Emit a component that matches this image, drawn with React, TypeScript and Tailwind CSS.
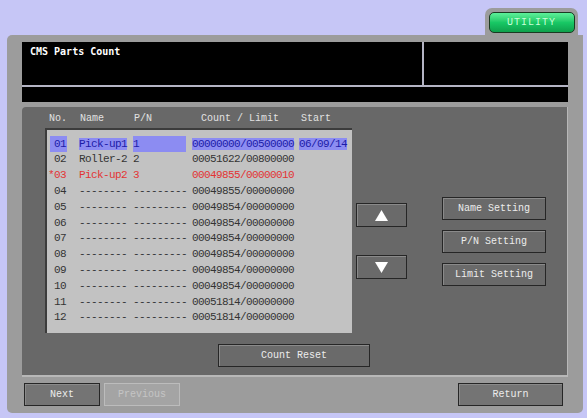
import React from "react";

const mono = { fontFamily: '"Liberation Mono", "DejaVu Sans Mono", monospace' };
const monoBold = { fontFamily: '"DejaVu Sans Mono", "Liberation Mono", monospace' };

type Row = { no: string; name: string; pn: string; count: string; start?: string; kind?: "sel" | "red" };

const rows: Row[] = [
  { no: "01", name: "Pick-up1", pn: "1", count: "00000000/00500000", start: "06/09/14", kind: "sel" },
  { no: "02", name: "Roller-2", pn: "2", count: "00051622/00800000" },
  { no: "*03", name: "Pick-up2", pn: "3", count: "00049855/00000010", kind: "red" },
  { no: "04", name: "--------", pn: "---------", count: "00049855/00000000" },
  { no: "05", name: "--------", pn: "---------", count: "00049854/00000000" },
  { no: "06", name: "--------", pn: "---------", count: "00049854/00000000" },
  { no: "07", name: "--------", pn: "---------", count: "00049854/00000000" },
  { no: "08", name: "--------", pn: "---------", count: "00049854/00000000" },
  { no: "09", name: "--------", pn: "---------", count: "00049854/00000000" },
  { no: "10", name: "--------", pn: "---------", count: "00049854/00000000" },
  { no: "11", name: "--------", pn: "---------", count: "00051814/00000000" },
  { no: "12", name: "--------", pn: "---------", count: "00051814/00000000" },
];

function Btn({ children, className = "" }: { children: React.ReactNode; className?: string }) {
  return (
    <div
      className={
        "flex items-center justify-center bg-[#6a6a6a] border border-[#262626] text-[#ececec] text-[10px] shadow-[inset_1px_1px_0_#8a8a8a] " +
        className
      }
      style={mono}
    >
      {children}
    </div>
  );
}

export default function App() {
  return (
    <div className="w-[587px] h-[418px] bg-[#c6c6f6] flex flex-col overflow-hidden" style={mono}>
      {/* top strip with tab */}
      <div className="h-[35px] flex justify-end items-end pr-[9px]">
        <div className="w-[93px] h-[27px] bg-[#9c9c9c] rounded-t-[7px] flex justify-center pt-[4px]">
          <div className="w-[86px] h-[21px] rounded-[5px] border border-[#1a3a22] bg-gradient-to-b from-[#5cf09a] via-[#18c865] to-[#0ea04c] flex items-center justify-center text-[10px] tracking-[1px] text-[#c8ffd8]">
            UTILITY
          </div>
        </div>
      </div>

      {/* main panel */}
      <div className="ml-[7px] w-[576px] h-[378px] bg-[#9c9c9c] rounded-b-[5px] rounded-tl-[5px] pt-[7px] px-[15px] flex flex-col">
        {/* black header */}
        <div className="w-[546px] h-[60px] bg-black flex flex-col">
          <div className="h-[43px] flex">
            <div className="w-[400px] pl-[8px] pt-[2px] text-white text-[10px] font-bold" style={monoBold}>
              CMS Parts Count
            </div>
            <div className="w-[2px] bg-[#b4b4c4]" />
            <div className="flex-1" />
          </div>
          <div className="h-[2px] bg-[#b4b4c4]" />
          <div className="flex-1" />
        </div>

        {/* dark panel */}
        <div className="mt-[5px] w-[546px] h-[270px] bg-[#686868] rounded-tl-[4px] border-b-2 border-r border-[#b8b8b8] flex flex-col">
          {/* headers */}
          <div className="h-[21px] flex items-center text-[10px] text-[#e2e2e2] pt-[1px]">
            <div className="w-[45px] text-right">No.</div>
            <div className="ml-[13px] w-[54px]">Name</div>
            <div className="w-[67px]">P/N</div>
            <div className="w-[100px]">Count / Limit</div>
            <div>Start</div>
          </div>

          <div className="flex items-start">
            {/* list */}
            <div className="ml-[23px] w-[307px] h-[205px] bg-[#c2c2c2] border-l-2 border-t-2 border-[#3c3c3c] pt-[6px] text-[11px] tracking-[-0.6px] text-[#343434]">
              {rows.map((r) => {
                const sel = r.kind === "sel";
                const red = r.kind === "red";
                const hl = sel ? "bg-[#8c8cf2] text-[#1c1ca8]" : "";
                return (
                  <div key={r.no} className={"h-[15.8px] flex items-center " + (red ? "text-[#e23434]" : "")}>
                    <div className={"ml-[3px] w-[17px] text-right pr-[1px] whitespace-nowrap " + hl}>
                      <span className={r.no.startsWith("*") ? "-ml-[6px]" : ""}>{r.no}</span>
                    </div>
                    <div className="ml-[12px] w-[54px] whitespace-pre">
                      <span className={hl}>{r.name}</span>
                    </div>
                    <div className={"w-[53px] whitespace-pre " + hl}>{r.pn}</div>
                    <div className="ml-[6px] w-[107px] whitespace-pre">
                      <span className={hl}>{r.count}</span>
                    </div>
                    <div className="whitespace-pre">{r.start ? <span className={hl}>{r.start}</span> : null}</div>
                  </div>
                );
              })}
            </div>

            {/* arrows */}
            <div className="ml-[4px] mt-[75px] flex flex-col gap-[28px]">
              <Btn className="w-[51px] h-[24px]">
                <svg width="13" height="11" viewBox="0 0 13 11">
                  <polygon points="6.5,0 13,11 0,11" fill="#ffffff" />
                </svg>
              </Btn>
              <Btn className="w-[51px] h-[24px]">
                <svg width="13" height="11" viewBox="0 0 13 11">
                  <polygon points="0,0 13,0 6.5,11" fill="#ffffff" />
                </svg>
              </Btn>
            </div>

            {/* settings */}
            <div className="ml-[35px] mt-[69px] flex flex-col gap-[10px]">
              <Btn className="w-[104px] h-[23px]">Name Setting</Btn>
              <Btn className="w-[104px] h-[23px]">P/N Setting</Btn>
              <Btn className="w-[104px] h-[23px]">Limit Setting</Btn>
            </div>
          </div>

          <div className="mt-[11px] ml-[196px]">
            <Btn className="w-[152px] h-[23px]">Count Reset</Btn>
          </div>
        </div>

        {/* bottom buttons */}
        <div className="mt-[6px] flex items-center">
          <Btn className="ml-[2px] w-[76px] h-[23px] bg-[#747474]">Next</Btn>
          <div
            className="ml-[4px] w-[76px] h-[23px] flex items-center justify-center bg-[#a4a4a4] border border-[#bcbcbc] text-[#c4c4c4] text-[10px]"
            style={mono}
          >
            Previous
          </div>
          <Btn className="ml-auto mr-[5px] w-[105px] h-[23px] bg-[#747474]">Return</Btn>
        </div>
      </div>
    </div>
  );
}
